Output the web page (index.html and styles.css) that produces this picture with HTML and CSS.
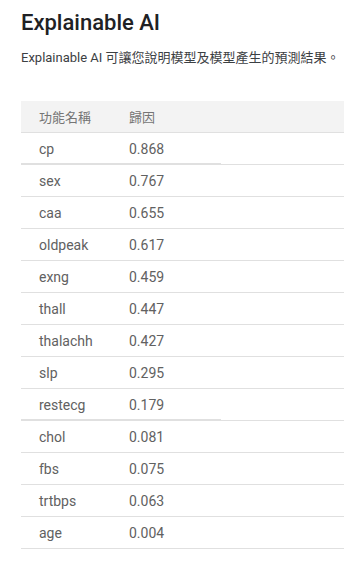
FILE: index.html
```html
<!DOCTYPE html>
<html lang="zh-Hant">
<head>
<meta charset="utf-8">
<link rel="stylesheet" href="styles.css">
</head>
<body>
<div class="page">
  <h1 class="title">Explainable AI</h1>
  <p class="desc">Explainable AI 可讓您說明模型及模型產生的預測結果。</p>
  <table class="attr">
    <thead>
      <tr><th class="c1">功能名稱</th><th class="c2">歸因</th><th class="c3"></th></tr>
    </thead>
    <tbody>
      <tr class="mark"><td class="c1">cp</td><td class="c2">0.868</td><td class="c3"></td></tr>
      <tr><td class="c1">sex</td><td class="c2">0.767</td><td class="c3"></td></tr>
      <tr><td class="c1">caa</td><td class="c2">0.655</td><td class="c3"></td></tr>
      <tr><td class="c1">oldpeak</td><td class="c2">0.617</td><td class="c3"></td></tr>
      <tr><td class="c1">exng</td><td class="c2">0.459</td><td class="c3"></td></tr>
      <tr><td class="c1">thall</td><td class="c2">0.447</td><td class="c3"></td></tr>
      <tr><td class="c1">thalachh</td><td class="c2">0.427</td><td class="c3"></td></tr>
      <tr><td class="c1">slp</td><td class="c2">0.295</td><td class="c3"></td></tr>
      <tr class="mark"><td class="c1">restecg</td><td class="c2">0.179</td><td class="c3"></td></tr>
      <tr><td class="c1">chol</td><td class="c2">0.081</td><td class="c3"></td></tr>
      <tr><td class="c1">fbs</td><td class="c2">0.075</td><td class="c3"></td></tr>
      <tr><td class="c1">trtbps</td><td class="c2">0.063</td><td class="c3"></td></tr>
      <tr><td class="c1">age</td><td class="c2">0.004</td><td class="c3"></td></tr>
    </tbody>
  </table>
</div>
</body>
</html>
```
FILE: styles.css
```css
html, body {
  margin: 0;
  padding: 0;
  background: #ffffff;
}
body {
  font-family: Roboto, "Noto Sans CJK TC", sans-serif;
  color: #202124;
  overflow: hidden;
}
.page {
  padding: 9px 0 0 21px;
}
.title {
  margin: 0;
  font-size: 22px;
  font-weight: 500;
  line-height: 28px;
  color: #202124;
}
.desc {
  margin: 12px 0 0 0;
  font-size: 13px;
  line-height: 18px;
  color: #3c4043;
  white-space: nowrap;
}
.attr {
  margin-top: 34px;
  border-collapse: collapse;
  width: 340px;
  table-layout: fixed;
}
.attr th {
  background: #f3f3f3;
  height: 31px;
  padding: 0;
  text-align: left;
  font-weight: 400;
  font-size: 13px;
  color: #757575;
  border-bottom: 1px solid #e0e0e0;
}
.attr td {
  height: 31px;
  padding: 0;
  font-size: 14px;
  color: #616161;
  border-bottom: 1px solid #e0e0e0;
}
.attr .c1 { width: 90px; padding-left: 18px; }
.attr .c2 { width: 92px; }
.attr .mark .c1, .attr .mark .c2 {
  box-shadow: inset 0 -1px 0 #e0e0e0;
}
```
